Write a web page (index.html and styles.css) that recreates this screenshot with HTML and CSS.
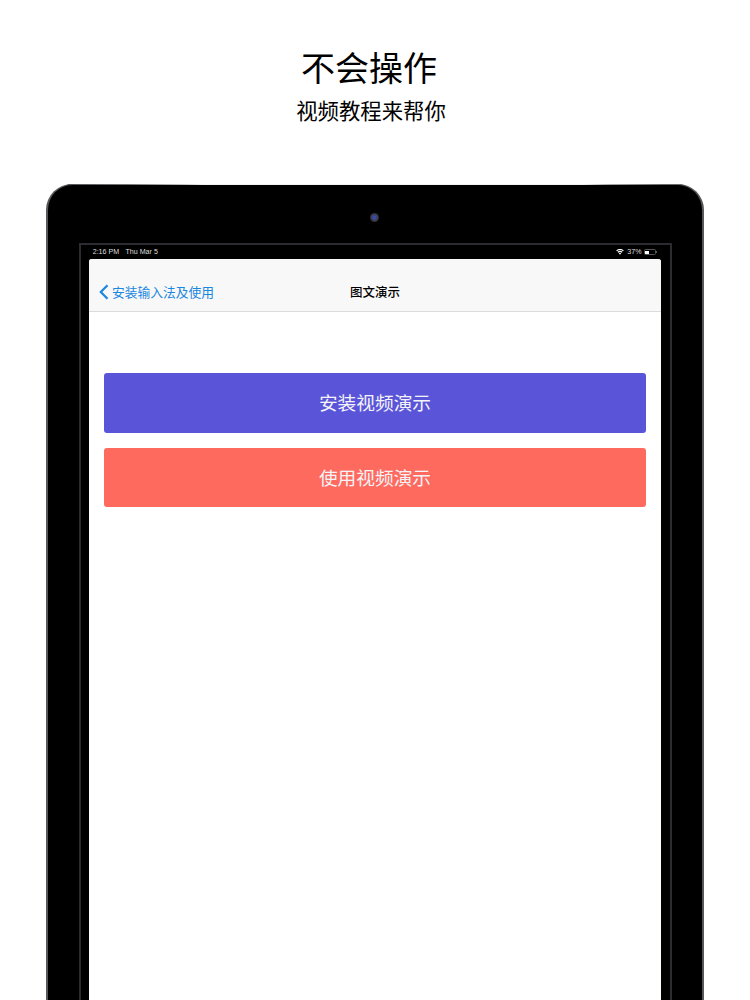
FILE: index.html
```html
<!DOCTYPE html>
<html lang="zh-CN">
<head>
<meta charset="utf-8">
<title>不会操作</title>
<link rel="stylesheet" href="styles.css">
</head>
<body>
<header class="hero">
  <h1 class="hero-title">不会操作</h1>
  <p class="hero-sub">视频教程来帮你</p>
</header>
<div class="device">
  <div class="camera"></div>
  <div class="frame">
    <div class="status">
      <div class="status-left"><span>2:16 PM</span><span>Thu Mar 5</span></div>
      <div class="status-right">
        <svg class="wifi" viewBox="0 0 12 9" width="8" height="6"><path d="M6 8.6 4.2 6.5a2.8 2.8 0 0 1 3.6 0zM3.3 5.5 2.2 4.3a5.8 5.8 0 0 1 7.6 0L8.7 5.5a4.2 4.2 0 0 0-5.4 0zM1.4 3.4.3 2.2a8.8 8.8 0 0 1 11.4 0l-1.1 1.2a7.1 7.1 0 0 0-9.2 0z" fill="#fff"/></svg>
        <span class="percent">37%</span>
        <span class="battery"><span class="battery-level"></span></span>
        <span class="battery-nub"></span>
      </div>
    </div>
    <div class="screen">
      <nav class="nav">
        <a class="back">
          <svg viewBox="0 0 10 16" width="10" height="16"><path d="M8.5 1.2 1.8 8l6.7 6.8" fill="none" stroke="#1a87e0" stroke-width="2.2"/></svg>
          <span>安装输入法及使用</span>
        </a>
        <div class="nav-title">图文演示</div>
      </nav>
      <main class="content">
        <button class="action action-install">安装视频演示</button>
        <button class="action action-use">使用视频演示</button>
      </main>
    </div>
  </div>
</div>
</body>
</html>
```
FILE: styles.css
```css
html, body {
  margin: 0;
  height: 1000px;
  overflow: hidden;
  background: #fff;
  font-family: "Noto Sans CJK SC", "Liberation Sans", sans-serif;
}
.hero {
  height: 184px;
  padding-top: 42px;
  box-sizing: border-box;
  text-align: center;
  color: #000;
}
.hero-title {
  margin: 0;
  padding-right: 12px;
  font-size: 34px;
  line-height: 50px;
  font-weight: 400;
}
.hero-sub {
  margin: 0;
  padding-right: 8px;
  font-size: 21.4px;
  line-height: 36px;
}
.device {
  position: relative;
  box-sizing: border-box;
  width: 658px;
  height: 860px;
  margin-left: 46px;
  padding: 58px 30.5px 0;
  background: #000;
  border-radius: 26px 26px 0 0;
  border: 2px solid #58585c;
  border-top-width: 1px;
  border-bottom: 0;
}
.device::before {
  content: "";
  position: absolute;
  left: 20px;
  right: 20px;
  top: -1px;
  height: 1px;
  background: linear-gradient(90deg, #55565a 0, #77787a 10%, #c4c4c6 19%, #f2f2f2 22%, #f2f2f2 84%, #a8a8aa 88%, #6a6a6c 97%);
}
.camera {
  position: absolute;
  left: 322px;
  top: 28px;
  width: 9px;
  height: 9px;
  border-radius: 50%;
  background: radial-gradient(circle, #3a4aa0 0 25%, #3a3a40 55%, #111 100%);
}
.frame {
  height: 800px;
  border: 2px solid #2c2c30;
  border-bottom: 0;
  padding: 0 8.5px;
}
.status {
  display: flex;
  justify-content: space-between;
  align-items: center;
  height: 14px;
  padding: 0 4px 0 3.7px;
  color: #dcdcdc;
  font: 7.1px/14px "Liberation Sans", sans-serif;
}
.status-left {
  display: flex;
  gap: 6.4px;
}
.status-right {
  display: flex;
  align-items: center;
}
.percent {
  margin: 0 2px 0 3px;
}
.battery {
  display: block;
  box-sizing: border-box;
  width: 12px;
  height: 6px;
  border: 0.5px solid #555;
  border-radius: 1.5px;
  padding: 0.5px;
}
.battery-level {
  display: block;
  width: 4px;
  height: 100%;
  background: #fff;
}
.battery-nub {
  display: block;
  width: 1px;
  height: 2px;
  margin-left: 0.5px;
  background: #555;
}
.screen {
  height: 786px;
  background: #fff;
  border-radius: 3px 3px 0 0;
  overflow: hidden;
}
.nav {
  position: relative;
  display: flex;
  align-items: center;
  justify-content: center;
  box-sizing: border-box;
  height: 52.5px;
  padding-top: 15px;
  background: #f8f8f8;
  border-bottom: 1px solid #dcdcde;
}
.back {
  position: absolute;
  left: 10px;
  top: 24px;
  display: flex;
  align-items: center;
  gap: 3px;
  color: #1a87e0;
  font-size: 12.75px;
  line-height: 18px;
}
.nav-title {
  font-size: 12.5px;
  line-height: 18px;
  color: #000;
  font-weight: 500;
}
.content {
  display: flex;
  flex-direction: column;
  gap: 15px;
  padding: 61.5px 15px 0;
}
.action {
  display: block;
  height: 59.5px;
  border: 0;
  border-radius: 3px;
  padding: 0 0 2px;
  color: #f4f4f8;
  font-family: inherit;
  font-size: 18.7px;
}
.action-install {
  background: #5a55d8;
}
.action-use {
  background: #ff6a5f;
}
```
